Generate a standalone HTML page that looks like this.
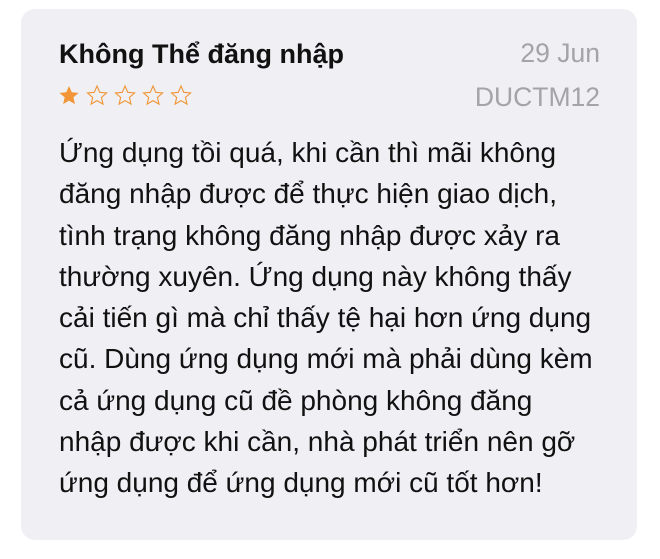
<!DOCTYPE html>
<html><head><meta charset="utf-8"><style>
body{margin:0;background:#fff;width:660px;height:559px;overflow:hidden;font-family:"Liberation Sans",sans-serif}
.card{position:absolute;left:21px;top:9px;width:616px;height:531px;background:#efeff4;border-radius:14px}
.t{position:absolute;left:38px;top:30px;font-size:27px;font-weight:bold;color:#111}
.d{position:absolute;right:37px;top:22px;font-size:26.5px;color:#a3a3a8;text-align:right;line-height:44px}
.s{position:absolute;left:37px;top:75px}
.b{position:absolute;left:38px;top:123px;font-size:28px;line-height:41.3px;color:#111;white-space:nowrap}
</style></head><body><div class="card">
<div class="t">Không Thể đăng nhập</div>
<div class="d">29 Jun<br>DUCTM12</div>
<svg class="s" width="140" height="23" viewBox="0 0 140 22">
<defs><path id="st" d="M11 1.5l2.8 6.3 6.8.6-5.2 4.5 1.6 6.7L11 16.1l-5.9 3.5 1.6-6.7L1.5 8.4l6.8-.6z"/></defs>
<use href="#st" fill="#f19536"/>
<use href="#st" x="28" fill="none" stroke="#f19536" stroke-width="1.1"/>
<use href="#st" x="56" fill="none" stroke="#f19536" stroke-width="1.1"/>
<use href="#st" x="84" fill="none" stroke="#f19536" stroke-width="1.1"/>
<use href="#st" x="112" fill="none" stroke="#f19536" stroke-width="1.1"/>
</svg>
<div class="b">Ứng dụng tồi quá, khi cần thì mãi không<br>đăng nhập được để thực hiện giao dịch,<br>tình trạng không đăng nhập được xảy ra<br>thường xuyên. Ứng dụng này không thấy<br>cải tiến gì mà chỉ thấy tệ hại hơn ứng dụng<br>cũ. Dùng ứng dụng mới mà phải dùng kèm<br>cả ứng dụng cũ đề phòng không đăng<br>nhập được khi cần, nhà phát triển nên gỡ<br>ứng dụng để ứng dụng mới cũ tốt hơn!</div>
</div></body></html>
